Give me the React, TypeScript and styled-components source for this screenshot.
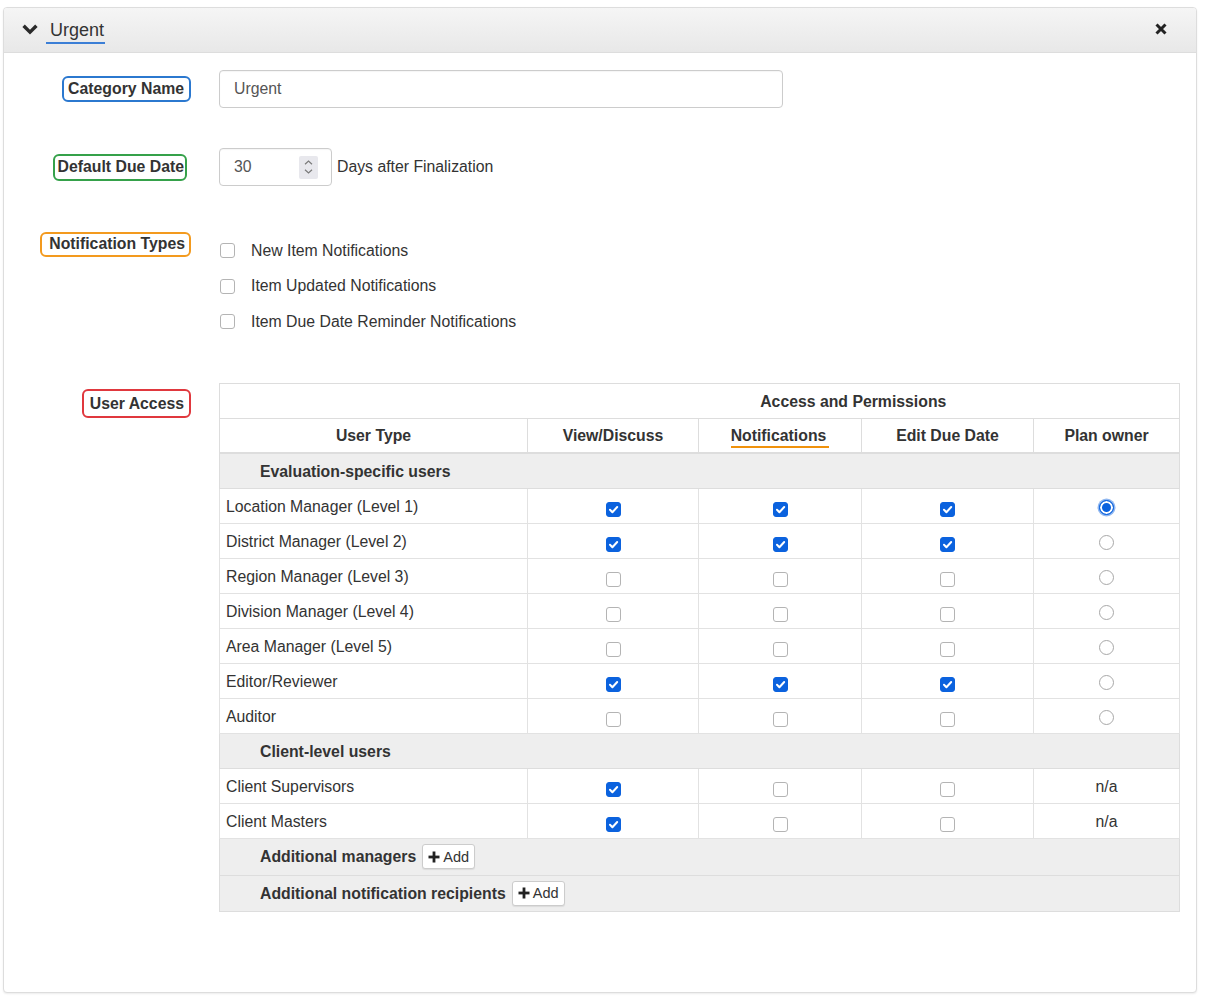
import React from 'react';
import styled, { createGlobalStyle } from 'styled-components';

const GlobalStyle = createGlobalStyle`
  html, body { margin: 0; padding: 0; background: #fff; }
  body {
    font-family: "Liberation Sans", Arial, sans-serif;
    font-size: 15.8px;
    color: #333;
  }
  * { box-sizing: border-box; }
`;

const Page = styled.div`
  padding: 7px 9px 12px 3px;
`;

const Panel = styled.section`
  height: 986px;
  border: 1px solid #ddd;
  border-radius: 4px;
  background: #fff;
  box-shadow: 0 1px 2px rgba(0, 0, 0, 0.08);
  display: flex;
  flex-direction: column;
`;

const PanelHeading = styled.header`
  height: 45px;
  display: flex;
  align-items: center;
  padding: 0 29px 0 18px;
  background: linear-gradient(to bottom, #f5f5f5 0%, #e8e8e8 100%);
  border-bottom: 1px solid #ddd;
  border-radius: 3px 3px 0 0;
`;

const Chevron = styled.svg`
  width: 16px;
  height: 11px;
  margin-right: 8px;
  margin-top: -2px;
`;

const Title = styled.span`
  font-size: 18px;
  color: #333;
  padding: 0 1px 1px 4px;
  border-bottom: 2px solid #3c7fd6;
  line-height: 21px;
  margin-top: 4px;
`;

const CloseIcon = styled.svg`
  width: 12px;
  height: 12px;
  margin-left: auto;
  margin-top: -2px;
`;

const Body = styled.div`
  padding: 17px 17px 0 0;
  display: flex;
  flex-direction: column;
`;

const FormRow = styled.div<{ $align?: string; $mb: number }>`
  display: grid;
  grid-template-columns: 187px 960px;
  column-gap: 28px;
  align-items: ${(p) => p.$align || 'center'};
  margin-bottom: ${(p) => p.$mb}px;
`;

const LabelCell = styled.div`
  display: flex;
  justify-content: flex-end;
`;

const FieldLabel = styled.label<{ $color: string; $pad?: string; $mr?: number; $mt?: number }>`
  display: inline-block;
  border: 2px solid ${(p) => p.$color};
  border-radius: 6px;
  padding: ${(p) => p.$pad || '1px 5px'};
  margin-right: ${(p) => p.$mr || 0}px;
  margin-top: ${(p) => p.$mt || 0}px;
  font-weight: bold;
  font-size: 15.8px;
  line-height: 20px;
  color: #333;
  white-space: nowrap;
`;

const TextInput = styled.input`
  width: 564px;
  height: 38px;
  border: 1px solid #ccc;
  border-radius: 4px;
  padding: 0 14px;
  font-family: inherit;
  font-size: 15.8px;
  color: #555;
  box-shadow: inset 0 1px 1px rgba(0, 0, 0, 0.04);
  outline: none;
`;

const InlineGroup = styled.div`
  display: flex;
  align-items: center;
  gap: 5px;
`;

const NumberField = styled.div`
  width: 113px;
  height: 38px;
  border: 1px solid #ccc;
  border-radius: 4px;
  display: flex;
  align-items: center;
  justify-content: space-between;
  padding: 0 13px 0 14px;
  color: #555;
  box-shadow: inset 0 1px 1px rgba(0, 0, 0, 0.04);
`;

const Spinner = styled.span`
  width: 19px;
  height: 23px;
  border-radius: 2px;
  background: #e8e8ed;
  display: flex;
  flex-direction: column;
  align-items: center;
  justify-content: center;
  gap: 4px;
`;

const CheckList = styled.div`
  display: flex;
  flex-direction: column;
`;

const CheckItem = styled.div`
  height: 35.5px;
  display: flex;
  align-items: center;
  gap: 16px;
  padding-left: 1px;
  padding-top: 2px;
`;

const Box = styled.span<{ $checked?: boolean }>`
  display: inline-flex;
  align-items: center;
  justify-content: center;
  width: 15px;
  height: 15px;
  border-radius: 3px;
  border: 1px solid ${(p) => (p.$checked ? '#0b62de' : '#b4b4b4')};
  background: ${(p) => (p.$checked ? '#0b62de' : '#fff')};
  vertical-align: middle;
`;

const Radio = styled.span<{ $checked?: boolean }>`
  display: inline-block;
  width: 15px;
  height: 15px;
  border-radius: 50%;
  border: 1px solid ${(p) => (p.$checked ? '#0b62de' : '#a8a8a8')};
  background: ${(p) => (p.$checked ? '#0b62de' : '#fff')};
  box-shadow: ${(p) => (p.$checked ? 'inset 0 0 0 2px #fff, 0 0 0 1.5px rgba(11,98,222,0.45)' : 'none')};
  vertical-align: middle;
`;

const Table = styled.table`
  width: 960px;
  border-collapse: collapse;
  border: 1px solid #ddd;
  table-layout: fixed;
`;

const Th = styled.th<{ $noRight?: boolean; $noLeft?: boolean; $thick?: boolean }>`
  height: 35px;
  padding: 2px 7px 0;
  font-weight: bold;
  text-align: center;
  border: 1px solid #ddd;
  ${(p) => (p.$noRight ? 'border-right: none;' : '')}
  ${(p) => (p.$noLeft ? 'border-left: none;' : '')}
  ${(p) => (p.$thick ? 'border-bottom: 2px solid #ddd;' : '')}
  color: #333;
`;

const Underlined = styled.span`
  border-bottom: 2px solid #f0920c;
  padding: 0 3px 2px 0;
`;

const Td = styled.td<{ $center?: boolean }>`
  height: 35px;
  padding: 2px 6px 0;
  border: 1px solid #e2e2e2;
  text-align: ${(p) => (p.$center ? 'center' : 'left')};
  vertical-align: middle;
  color: #333;
`;

const GroupRow = styled.tr<{ $h?: number }>`
  background: #eeeeee;
  td {
    height: ${(p) => p.$h || 35}px;
    padding: 2px 6px 0 40px;
    font-weight: bold;
    border: 1px solid #ddd;
  }
`;

const CellMark = styled.span`
  display: inline-block;
  margin-top: 5px;
`;

const AddButton = styled.button`
  display: inline-flex;
  align-items: center;
  gap: 3px;
  height: 25px;
  margin-left: 6px;
  margin-top: -2px;
  padding: 0 5px;
  background: #fff;
  border: 1px solid #ccc;
  border-radius: 3px;
  box-shadow: 0 1px 1px rgba(0, 0, 0, 0.08);
  font-family: inherit;
  font-size: 14.5px;
  font-weight: normal;
  color: #333;
  vertical-align: middle;
  cursor: pointer;
`;

const CheckMark = () => (
  <svg width="11" height="11" viewBox="0 0 11 11">
    <path d="M2 5.8 L4.4 8.2 L9.2 3" stroke="#fff" strokeWidth="2" fill="none" strokeLinecap="round" strokeLinejoin="round" />
  </svg>
);

const CheckBox = ({ checked }: { checked?: boolean }) => (
  <Box $checked={checked}>{checked && <CheckMark />}</Box>
);

const PlusIcon = () => (
  <svg width="12" height="12" viewBox="0 0 12 12">
    <rect x="4.6" y="0.5" width="2.8" height="11" fill="#222" />
    <rect x="0.5" y="4.6" width="11" height="2.8" fill="#222" />
  </svg>
);

type Owner = 'on' | 'off' | 'na';
type UserRow = { name: string; v: boolean; n: boolean; e: boolean; owner: Owner };

const evalUsers: UserRow[] = [
  { name: 'Location Manager (Level 1)', v: true, n: true, e: true, owner: 'on' },
  { name: 'District Manager (Level 2)', v: true, n: true, e: true, owner: 'off' },
  { name: 'Region Manager (Level 3)', v: false, n: false, e: false, owner: 'off' },
  { name: 'Division Manager (Level 4)', v: false, n: false, e: false, owner: 'off' },
  { name: 'Area Manager (Level 5)', v: false, n: false, e: false, owner: 'off' },
  { name: 'Editor/Reviewer', v: true, n: true, e: true, owner: 'off' },
  { name: 'Auditor', v: false, n: false, e: false, owner: 'off' },
];

const clientUsers: UserRow[] = [
  { name: 'Client Supervisors', v: true, n: false, e: false, owner: 'na' },
  { name: 'Client Masters', v: true, n: false, e: false, owner: 'na' },
];

const UserRowView = ({ row }: { row: UserRow }) => (
  <tr>
    <Td>{row.name}</Td>
    <Td $center>
      <CellMark><CheckBox checked={row.v} /></CellMark>
    </Td>
    <Td $center>
      <CellMark><CheckBox checked={row.n} /></CellMark>
    </Td>
    <Td $center>
      <CellMark><CheckBox checked={row.e} /></CellMark>
    </Td>
    <Td $center>
      {row.owner === 'na' ? 'n/a' : <Radio $checked={row.owner === 'on'} />}
    </Td>
  </tr>
);

export default function App() {
  return (
    <>
      <GlobalStyle />
      <Page>
        <Panel>
          <PanelHeading>
            <Chevron viewBox="0 0 16 11">
              <path d="M1.6 1.8 L8 8.2 L14.4 1.8" stroke="#2a2a2a" strokeWidth="3.4" fill="none" />
            </Chevron>
            <Title>Urgent</Title>
            <CloseIcon viewBox="0 0 12 12">
              <path d="M1.5 1.5 L10.5 10.5 M10.5 1.5 L1.5 10.5" stroke="#222" strokeWidth="3" />
            </CloseIcon>
          </PanelHeading>
          <Body>
            <FormRow $mb={40}>
              <LabelCell>
                <FieldLabel $color="#2b78cf" $pad="1px 5px 1px 4px">Category Name</FieldLabel>
              </LabelCell>
              <TextInput defaultValue="Urgent" readOnly />
            </FormRow>

            <FormRow $mb={46}>
              <LabelCell>
                <FieldLabel $color="#35a14a" $pad="1px 1px 2px 3px" $mr={4}>
                  Default Due Date
                </FieldLabel>
              </LabelCell>
              <InlineGroup>
                <NumberField>
                  <span>30</span>
                  <Spinner>
                    <svg width="9" height="5" viewBox="0 0 9 5">
                      <path d="M1 4.2 L4.5 1 L8 4.2" stroke="#7a7a7a" strokeWidth="1.2" fill="none" />
                    </svg>
                    <svg width="9" height="5" viewBox="0 0 9 5">
                      <path d="M1 0.8 L4.5 4 L8 0.8" stroke="#7a7a7a" strokeWidth="1.2" fill="none" />
                    </svg>
                  </Spinner>
                </NumberField>
                <span>Days after Finalization</span>
              </InlineGroup>
            </FormRow>

            <FormRow $align="start" $mb={44}>
              <LabelCell>
                <FieldLabel $color="#f39a1e" $pad="0px 4px 1px 7px">Notification Types</FieldLabel>
              </LabelCell>
              <CheckList>
                <CheckItem>
                  <CheckBox />
                  <span>New Item Notifications</span>
                </CheckItem>
                <CheckItem>
                  <CheckBox />
                  <span>Item Updated Notifications</span>
                </CheckItem>
                <CheckItem>
                  <CheckBox />
                  <span>Item Due Date Reminder Notifications</span>
                </CheckItem>
              </CheckList>
            </FormRow>

            <FormRow $align="start" $mb={0}>
              <LabelCell>
                <FieldLabel $color="#e0383e" $pad="3px 5px 2px 6px" $mt={6}>User Access</FieldLabel>
              </LabelCell>
              <Table>
                <colgroup>
                  <col style={{ width: 308 }} />
                  <col style={{ width: 171 }} />
                  <col style={{ width: 163 }} />
                  <col style={{ width: 172 }} />
                  <col style={{ width: 146 }} />
                </colgroup>
                <thead>
                  <tr>
                    <Th $noRight />
                    <Th colSpan={4} $noLeft>Access and Permissions</Th>
                  </tr>
                  <tr>
                    <Th $thick>User Type</Th>
                    <Th $thick>View/Discuss</Th>
                    <Th $thick><Underlined>Notifications</Underlined></Th>
                    <Th $thick>Edit Due Date</Th>
                    <Th $thick>Plan owner</Th>
                  </tr>
                </thead>
                <tbody>
                  <GroupRow>
                    <td colSpan={5}>Evaluation-specific users</td>
                  </GroupRow>
                  {evalUsers.map((r) => (
                    <UserRowView key={r.name} row={r} />
                  ))}
                  <GroupRow>
                    <td colSpan={5}>Client-level users</td>
                  </GroupRow>
                  {clientUsers.map((r) => (
                    <UserRowView key={r.name} row={r} />
                  ))}
                  <GroupRow $h={37}>
                    <td colSpan={5}>
                      Additional managers
                      <AddButton type="button"><PlusIcon />Add</AddButton>
                    </td>
                  </GroupRow>
                  <GroupRow $h={36}>
                    <td colSpan={5}>
                      Additional notification recipients
                      <AddButton type="button"><PlusIcon />Add</AddButton>
                    </td>
                  </GroupRow>
                </tbody>
              </Table>
            </FormRow>
          </Body>
        </Panel>
      </Page>
    </>
  );
}
